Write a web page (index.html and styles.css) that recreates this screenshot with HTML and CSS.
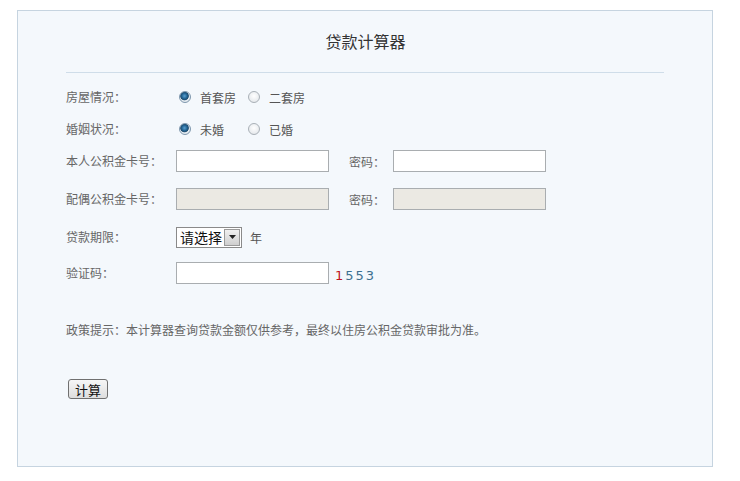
FILE: index.html
```html
<!DOCTYPE html>
<html lang="zh-CN">
<head>
<meta charset="utf-8">
<title>贷款计算器</title>
<link rel="stylesheet" href="styles.css">
</head>
<body>
<div class="calc">
  <h1 class="title">贷款计算器</h1>
  <div class="divider"></div>
  <form class="form">
    <div class="row row-a">
      <span class="label">房屋情况：</span>
      <label class="opt"><input type="radio" name="house" checked><span>首套房</span></label>
      <label class="opt"><input type="radio" name="house"><span>二套房</span></label>
    </div>
    <div class="row row-a">
      <span class="label">婚姻状况：</span>
      <label class="opt"><input type="radio" name="marry" checked><span>未婚</span></label>
      <label class="opt"><input type="radio" name="marry"><span>已婚</span></label>
    </div>
    <div class="row row-a">
      <span class="label">本人公积金卡号：</span>
      <input class="text" type="text">
      <span class="label2">密码：</span>
      <input class="text" type="password">
    </div>
    <div class="row row-b">
      <span class="label">配偶公积金卡号：</span>
      <input class="text" type="text" disabled>
      <span class="label2">密码：</span>
      <input class="text" type="password" disabled>
    </div>
    <div class="row row-a">
      <span class="label">贷款期限：</span>
      <span class="select">
        <select class="sel"><option>请选择</option></select>
        <span class="sel-btn"><svg width="7" height="4" viewBox="0 0 7 4"><path d="M0 0h7L3.5 4z" fill="#222"/></svg></span>
      </span>
      <span class="unit">年</span>
    </div>
    <div class="row row-c">
      <span class="label">验证码：</span>
      <input class="text" type="text">
      <span class="code"><span class="c1">1</span>553</span>
    </div>
    <p class="tip">政策提示：本计算器查询贷款金额仅供参考，最终以住房公积金贷款审批为准。</p>
    <button class="btn" type="button">计算</button>
  </form>
</div>
</body>
</html>
```

FILE: styles.css
```css
* { box-sizing: border-box; }
html, body { margin: 0; padding: 0; background: #ffffff; }
body {
  font-family: "Noto Sans CJK SC", "Noto Sans", "Liberation Sans", sans-serif;
  font-size: 12px;
  color: #666;
}
.calc {
  margin: 10px 0 0 17px;
  width: 696px;
  height: 457px;
  border: 1px solid #c6d4e0;
  background: #f4f8fc;
  padding-top: 18px;
}
.title {
  margin: 0;
  font-size: 16px;
  font-weight: normal;
  line-height: 24px;
  height: 24px;
  text-align: center;
  color: #333;
  padding-left: 1px;
}
.divider {
  margin: 19px 48px 0 48px;
  height: 1px;
  background: #cfdde9;
}
.form {
  margin: 8px 0 0 48px;
}
.row {
  display: flex;
  align-items: center;
}
.row-a { height: 32px; }
.row-b { height: 44px; }
.row-c { height: 40px; }
.label {
  width: 110px;
  line-height: 16px;
}
.opt {
  width: 69px;
  display: flex;
  align-items: center;
  color: #555;
}
.opt input {
  appearance: none;
  -webkit-appearance: none;
  margin: 0 9px 0 3px;
  width: 12px;
  height: 12px;
  border-radius: 50%;
  border: 1px solid #a9b0b7;
  background: radial-gradient(circle at 50% 40%, #ffffff 0%, #e8ebee 70%, #d5dade 100%);
}
.opt input:checked {
  border-color: #7e97ad;
  background: radial-gradient(circle at 45% 40%, #5aa0d0 0%, #1f5f8e 35%, #234e70 48%, #e8eef3 58%, #d7dee5 100%);
}
.text {
  width: 153px;
  height: 22px;
  border: 1px solid #a9adb0;
  background: #fff;
  margin: 0;
  padding: 0 3px;
  font: inherit;
}
.text:disabled {
  background: #ebe9e3;
  border-color: #a9adb0;
}
.label2 {
  width: 64px;
  padding-left: 20px;
}
.select {
  display: inline-flex;
  align-items: stretch;
  width: 66px;
  height: 21px;
  border: 1px solid #8a8a8a;
  background: #fff;
}
.sel {
  appearance: none;
  -webkit-appearance: none;
  border: 0;
  background: #fff;
  margin: 0;
  padding: 0 0 0 3px;
  width: 48px;
  font-family: "Noto Sans CJK SC", sans-serif;
  font-size: 14px;
  line-height: 19px;
  color: #111;
  outline: none;
}
.sel-btn {
  width: 16px;
  margin: 1px;
  border: 1px solid #9a9a9a;
  background: linear-gradient(#f0f0f0, #cfcfcf);
  display: flex;
  align-items: center;
  justify-content: center;
}
.unit {
  margin-left: 8px;
  color: #555;
}
.code {
  margin-left: 6px;
  margin-top: 4px;
  font-family: "DejaVu Sans", sans-serif;
  font-size: 13px;
  letter-spacing: 2px;
  color: #3d7090;
}
.c1 { color: #c0141c; }
.tip {
  margin: 27px 0 0 0;
  line-height: 20px;
}
.btn {
  margin: 39px 0 0 2px;
  width: 40px;
  height: 20px;
  padding: 0;
  border: 1px solid #707070;
  border-radius: 3px;
  background: linear-gradient(#f6f6f6, #dedede);
  font-family: "Noto Sans CJK SC", sans-serif;
  font-size: 13px;
  line-height: 17px;
  color: #111;
}
```
